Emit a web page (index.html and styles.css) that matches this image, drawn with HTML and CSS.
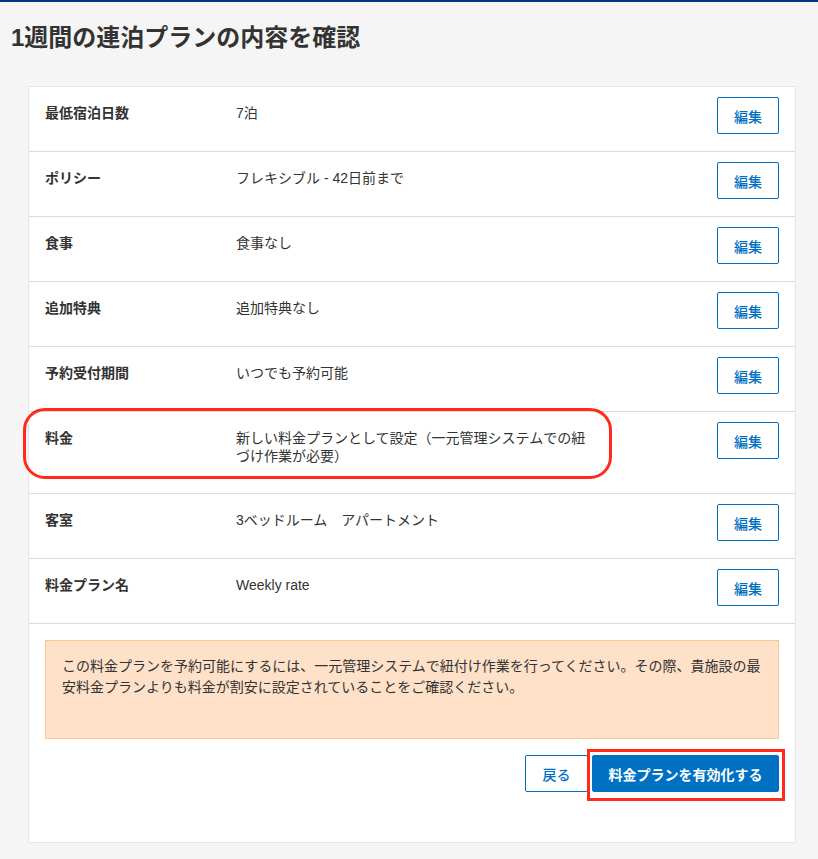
FILE: index.html
```html
<!DOCTYPE html>
<html lang="ja">
<head>
<meta charset="utf-8">
<title>1週間の連泊プランの内容を確認</title>
<link rel="stylesheet" href="styles.css">
</head>
<body>
<div class="topbar"></div>
<h1 class="title">1週間の連泊プランの内容を確認</h1>
<div class="card">
  <div class="row">
    <div class="label">最低宿泊日数</div>
    <div class="value">7泊</div>
    <button class="edit">編集</button>
  </div>
  <div class="row">
    <div class="label">ポリシー</div>
    <div class="value">フレキシブル - 42日前まで</div>
    <button class="edit">編集</button>
  </div>
  <div class="row">
    <div class="label">食事</div>
    <div class="value">食事なし</div>
    <button class="edit">編集</button>
  </div>
  <div class="row">
    <div class="label">追加特典</div>
    <div class="value">追加特典なし</div>
    <button class="edit">編集</button>
  </div>
  <div class="row">
    <div class="label">予約受付期間</div>
    <div class="value">いつでも予約可能</div>
    <button class="edit">編集</button>
  </div>
  <div class="row">
    <div class="label">料金</div>
    <div class="value">新しい料金プランとして設定（一元管理システムでの紐づけ作業が必要）</div>
    <button class="edit">編集</button>
  </div>
  <div class="row">
    <div class="label">客室</div>
    <div class="value">3ベッドルーム　アパートメント</div>
    <button class="edit">編集</button>
  </div>
  <div class="row">
    <div class="label">料金プラン名</div>
    <div class="value">Weekly rate</div>
    <button class="edit">編集</button>
  </div>
  <div class="footer">
    <div class="notice">この料金プランを予約可能にするには、一元管理システムで紐付け作業を行ってください。その際、貴施設の最安料金プランよりも料金が割安に設定されていることをご確認ください。</div>
    <div class="actions">
      <button class="btn-back">戻る</button>
      <button class="btn-primary">料金プランを有効化する</button>
    </div>
  </div>
  <div class="mark mark-rate"></div>
  <div class="mark mark-button"></div>
</div>
</body>
</html>
```
FILE: styles.css
```css
* { box-sizing: border-box; }
html, body { margin: 0; padding: 0; }
body {
  background: #f5f5f5;
  color: #333333;
  font-family: "Liberation Sans", "Noto Sans CJK JP", sans-serif;
  font-size: 14px;
  width: 818px;
  height: 859px;
  overflow: hidden;
}
.topbar { height: 2px; background: #003580; }
.title {
  margin: 20px 0 0 11px;
  font-size: 24px;
  line-height: 32px;
  font-weight: 700;
  color: #333333;
}
.card {
  position: relative;
  margin: 32px 0 0 28px;
  width: 768px;
  background: #ffffff;
  border: 1px solid #e6e6e6;
}
.row {
  display: flex;
  align-items: flex-start;
  padding: 10px 16px 17px 16px;
  border-bottom: 1px solid #dcdcdc;
}
.label {
  width: 191px;
  flex: none;
  font-weight: 700;
  line-height: 18px;
  padding: 7px 0 11px;
}
.value {
  width: 360px;
  flex: none;
  line-height: 18px;
  padding: 7px 0 11px;
}
.edit {
  margin-left: auto;
  width: 62px;
  height: 37px;
  background: #ffffff;
  border: 1px solid #0071c2;
  border-radius: 2px;
  color: #0071c2;
  font-family: inherit;
  font-size: 14px;
  font-weight: 500;
  padding: 0;
}
.footer { padding: 16px 16px 50px; }
.notice {
  background: #fee1c8;
  border: 1px solid #f8c88f;
  padding: 15px 16px 40px;
  line-height: 21px;
  font-size: 14px;
}
.actions {
  display: flex;
  justify-content: flex-end;
  gap: 4px;
  margin-top: 16px;
}
.btn-back {
  width: 63px;
  height: 37px;
  background: #ffffff;
  border: 1px solid #0071c2;
  border-radius: 2px;
  color: #0071c2;
  font-family: inherit;
  font-size: 14px;
  font-weight: 500;
  padding: 0;
}
.btn-primary {
  width: 187px;
  height: 37px;
  background: #0071c2;
  border: 1px solid #0071c2;
  border-radius: 2px;
  color: #ffffff;
  font-family: inherit;
  font-size: 14px;
  font-weight: 700;
  padding: 0;
}
.mark {
  position: absolute;
  border: 3px solid #ff2a1a;
  pointer-events: none;
}
.mark-rate {
  left: -6px;
  top: 321px;
  width: 589px;
  height: 71px;
  border-radius: 22px;
}
.mark-button {
  left: 558px;
  top: 662px;
  width: 198px;
  height: 52px;
}
```
